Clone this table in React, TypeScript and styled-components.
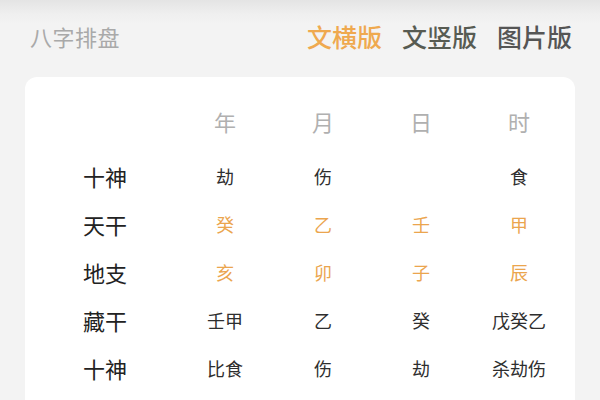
import React from "react";
import styled, { createGlobalStyle } from "styled-components";

const Global = createGlobalStyle`
  html, body { margin: 0; padding: 0; }
  body {
    width: 600px;
    height: 400px;
    overflow: hidden;
    font-family: "Noto Sans CJK SC", "Noto Sans", sans-serif;
    background: #f3f3f3;
  }
`;

const Page = styled.div`
  width: 600px;
  height: 400px;
  overflow: hidden;
  background: linear-gradient(#e4e4e4 0px, #efefef 14px, #f3f3f3 24px, #f3f3f3 100%);
  display: flex;
  flex-direction: column;
`;

const Header = styled.div`
  display: flex;
  align-items: center;
  justify-content: space-between;
  height: 40px;
  margin-top: 16px;
  padding: 0 28px 0 30px;
  flex: none;
`;

const Title = styled.div`
  font-size: 22px;
  color: #a9a9a9;
  letter-spacing: 0.5px;
`;

const Tabs = styled.div`
  display: flex;
  gap: 20px;
`;

const Tab = styled.div<{ $active?: boolean; $tone?: string }>`
  font-size: 25px;
  font-weight: 500;
  color: ${(p) => (p.$active ? "#efa94f" : p.$tone || "#555")};
`;

const Card = styled.div`
  margin: 21px 25px 0 25px;
  background: #fff;
  border-radius: 12px;
  flex: none;
  height: 380px;
  padding: 22px 0 0 5px;
`;

const Grid = styled.div`
  display: grid;
  grid-template-columns: 146px repeat(4, 98px);
  grid-template-rows: 53px;
  grid-auto-rows: 48px;
`;

const Row = styled.div`
  display: contents;
`;

const Cell = styled.div<{ $kind?: "head" | "label" | "value" | "stem" }>`
  display: flex;
  align-items: center;
  justify-content: center;
  white-space: nowrap;
  padding-bottom: ${(p) => (p.$kind === "head" ? "9px" : "0")};
  padding-left: ${(p) => (p.$kind === "label" ? "4px" : "0")};
  font-size: ${(p) => (p.$kind === "label" || p.$kind === "head" ? "22px" : "18px")};
  color: ${(p) =>
    p.$kind === "head"
      ? "#b0b0b0"
      : p.$kind === "stem"
      ? "#eba54e"
      : p.$kind === "label"
      ? "#222"
      : "#2e2e2e"};
`;

const rows: { label: string; values: string[]; stem?: boolean }[] = [
  { label: "十神", values: ["劫", "伤", "", "食"] },
  { label: "天干", values: ["癸", "乙", "壬", "甲"], stem: true },
  { label: "地支", values: ["亥", "卯", "子", "辰"], stem: true },
  { label: "藏干", values: ["壬甲", "乙", "癸", "戊癸乙"] },
  { label: "十神", values: ["比食", "伤", "劫", "杀劫伤"] },
];

export default function App() {
  return (
    <Page>
      <Global />
      <Header>
        <Title>八字排盘</Title>
        <Tabs>
          <Tab $active>文横版</Tab>
          <Tab $tone="#575b52">文竖版</Tab>
          <Tab $tone="#555555">图片版</Tab>
        </Tabs>
      </Header>
      <Card>
        <Grid>
          <Row>
            <Cell $kind="head" />
            {["年", "月", "日", "时"].map((h) => (
              <Cell key={h} $kind="head">
                {h}
              </Cell>
            ))}
          </Row>
          {rows.map((r, i) => (
            <Row key={i}>
              <Cell $kind="label">{r.label}</Cell>
              {r.values.map((v, j) => (
                <Cell key={j} $kind={r.stem ? "stem" : "value"}>
                  {v}
                </Cell>
              ))}
            </Row>
          ))}
        </Grid>
      </Card>
    </Page>
  );
}
